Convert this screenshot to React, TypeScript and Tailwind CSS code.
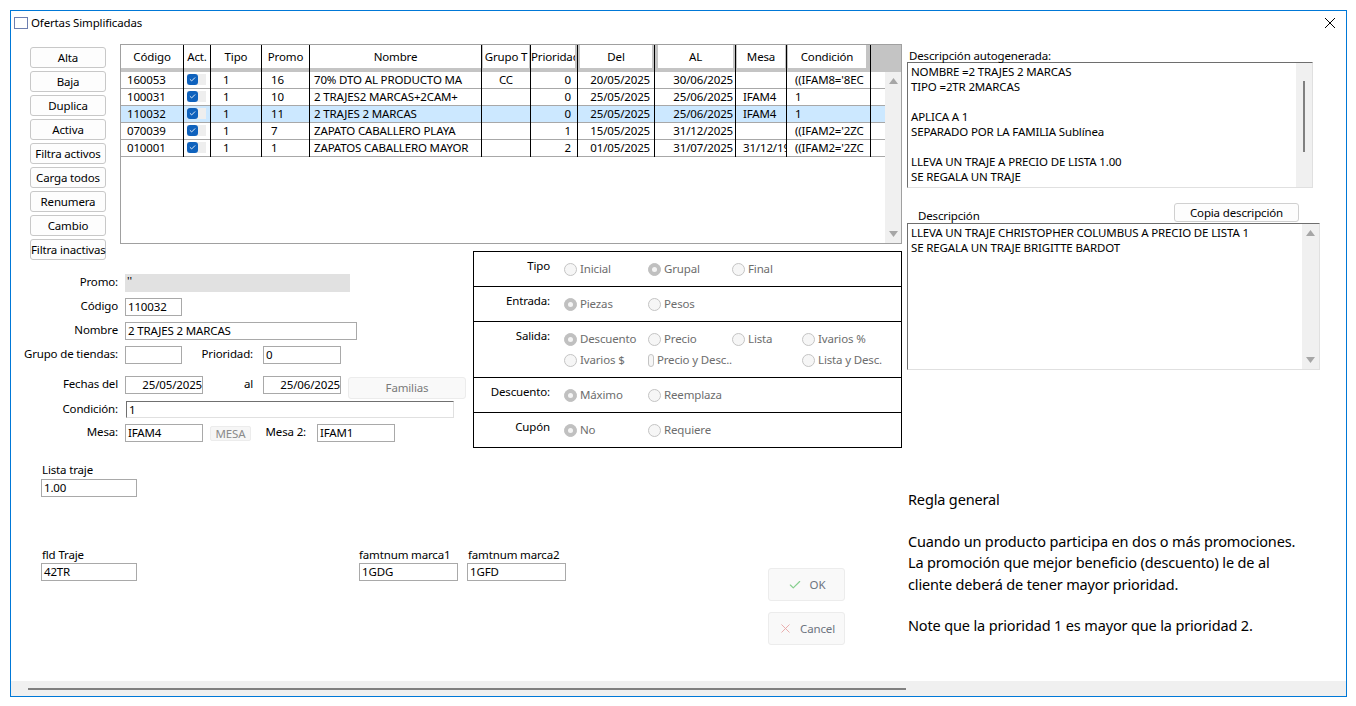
import * as React from 'react';
import { Check, X } from 'lucide-react';

// ── Data ──────────────────────────────────────────────────────────────────────

type Cell = { w: string; cell: string; head: string };

const COLUMNS: (Cell & { title: string })[] = [
  { title: 'Código',    w: 'w-[63px]', cell: 'pl-[6px]',           head: 'bg-white' },
  { title: 'Act.',      w: 'w-[27px]', cell: 'pl-[3px]',           head: 'bg-white' },
  { title: 'Tipo',      w: 'w-[51px]', cell: 'pl-[12px]',          head: 'bg-white' },
  { title: 'Promo',     w: 'w-[48px]', cell: 'pl-[9px]',           head: 'bg-white' },
  { title: 'Nombre',    w: 'w-[172px]', cell: 'pl-[4px]',          head: 'bg-white' },
  { title: 'Grupo T',   w: 'w-[49px]', cell: 'text-center',        head: 'bg-white ml-[1px] mr-[1px]' },
  { title: 'Prioridad', w: 'w-[47px]', cell: 'text-right pr-[6px]', head: 'bg-white mr-[2px]' },
  { title: 'Del',       w: 'w-[77px]', cell: 'text-right pr-[4px]', head: 'bg-white mx-[2px]' },
  { title: 'AL',        w: 'w-[81px]', cell: 'text-right pr-[2px]', head: 'bg-white ml-[3px] mr-[2px]' },
  { title: 'Mesa',      w: 'w-[51px]', cell: 'pl-[7px]',           head: 'bg-white mx-[1px]' },
  { title: 'Condición', w: 'w-[84px]', cell: 'pl-[8px]',           head: 'bg-white ml-[1px] mr-[4px]' },
];

const ROWS = [
  ['160053', '', '1', '16', '70% DTO AL PRODUCTO MA', 'CC', '0', '20/05/2025', '30/06/2025', '', "((IFAM8='8EC"],
  ['100031', '', '1', '10', '2 TRAJES2 MARCAS+2CAM+', '', '0', '25/05/2025', '25/06/2025', 'IFAM4', '1'],
  ['110032', '', '1', '11', '2 TRAJES 2 MARCAS', '', '0', '25/05/2025', '25/06/2025', 'IFAM4', '1'],
  ['070039', '', '1', '7', 'ZAPATO CABALLERO PLAYA', '', '1', '15/05/2025', '31/12/2025', '', "((IFAM2='2ZC"],
  ['010001', '', '1', '1', 'ZAPATOS CABALLERO MAYOR', '', '2', '01/05/2025', '31/07/2025', '31/12/1999', "((IFAM2='2ZC"],
];

const SIDE_BUTTONS = ['Alta', 'Baja', 'Duplica', 'Activa', 'Filtra activos', 'Carga todos', 'Renumera', 'Cambio', 'Filtra inactivas'];

// ── Small controls ────────────────────────────────────────────────────────────

function Arrow({ up }: { up?: boolean }) {
  return (
    <svg width="9" height="6" viewBox="0 0 9 6" className="fill-[#a6a6a6]">
      <path d={up ? 'M4.5 0 9 6H0z' : 'M0 0h9L4.5 6z'} />
    </svg>
  );
}

function Input({ w, value, h = 'h-[18px]', align = '' }: { w: string; value?: string; h?: string; align?: string }) {
  return (
    <div className={`${w} ${h} ${align} shrink-0 border border-[#a9a9a9] bg-white pl-[2px] leading-[16px] text-black whitespace-nowrap overflow-hidden`}>
      {value}
    </div>
  );
}

function Label({ w = 'w-[107px]', children }: { w?: string; children: React.ReactNode }) {
  return <div className={`${w} shrink-0 text-right text-black leading-[16px]`}>{children}</div>;
}

function Radio({ label, checked }: { label: string; checked?: boolean }) {
  return (
    <div className="flex h-[16px] items-center gap-[3px] text-[#6d6d6d] whitespace-nowrap">
      <span className={`flex h-[13px] w-[13px] items-center justify-center rounded-full border ${checked ? 'border-[#c0c0c0] bg-[#c0c0c0]' : 'border-[#c4c4c4] bg-[#f6f6f6]'}`}>
        {checked && <span className="h-[5px] w-[5px] rounded-full bg-[#f4f4f4]" />}
      </span>
      {label}
    </div>
  );
}

function RadioRow({ title, last, children, tall }: { title: string; last?: boolean; tall?: boolean; children: React.ReactNode }) {
  return (
    <div className={`flex ${tall ? 'h-[56px]' : last ? 'h-[34px]' : 'h-[35px]'} ${last ? '' : 'border-b border-black'}`}>
      <div className="w-[76px] pt-[6px] text-right leading-[16px] text-black">{title}</div>
      <div className="ml-[14px] grid grid-cols-[84px_84px_70px_1fr] gap-y-[5px] pt-[9px] w-[337px] content-start">
        {children}
      </div>
    </div>
  );
}

// ── Offers grid ───────────────────────────────────────────────────────────────

function OffersGrid() {
  return (
    <div className="ml-[14px] flex h-[200px] w-[782px] flex-col border border-[#a0a0a0] bg-white">
      <div className="flex h-[27px] shrink-0 bg-[#c4c4c4]">
        {COLUMNS.map(c => (
          <div key={c.title} className={`${c.w} shrink-0 border-r border-black`}>
            <div className={`${c.head} h-[23px] overflow-hidden whitespace-nowrap text-center leading-[23px] text-black`}>{c.title}</div>
          </div>
        ))}
      </div>
      <div className="flex flex-1">
        <div className="w-[764px]">
          {ROWS.map((r, idx) => (
            <div key={r[0]} className={`flex h-[17px] border-b border-[#a8a8a8] ${idx === 2 ? 'bg-[#cce8ff]' : ''}`}>
              {COLUMNS.map((c, i) => (
                <div key={c.title} className={`${c.w} ${c.cell} h-[17px] shrink-0 overflow-hidden whitespace-nowrap border-r border-black leading-[16px] text-black`}>
                  {i === 1 ? (
                    <span className="mt-[2px] flex h-[11px] w-[19px] bg-[#eeeeee]">
                      <span className="flex h-[11px] w-[11px] items-center justify-center rounded-[3px] bg-[#0f62bd]">
                        <Check size={7} strokeWidth={3} className="text-white" />
                      </span>
                    </span>
                  ) : r[i]}
                </div>
              ))}
            </div>
          ))}
        </div>
        <div className="flex w-[16px] flex-col items-center justify-between bg-[#f0f0f0] py-[6px]">
          <Arrow up />
          <Arrow />
        </div>
      </div>
    </div>
  );
}

// ── App ───────────────────────────────────────────────────────────────────────

export default function App() {
  return (
    <div className="h-[706px] w-[1356px] overflow-hidden bg-white pl-[10px] pt-[10px] font-['Noto_Sans','Open_Sans',sans-serif] text-[11.5px] tracking-[-0.15px]">
      <div className="flex h-[687px] w-[1337px] flex-col border border-[#0078d7]">
        {/* title bar */}
        <div className="flex h-[24px] shrink-0 items-center pl-[3px]">
          <span className="h-[12px] w-[14px] border border-[#6d7fb0] bg-white" />
          <span className="ml-[3px] text-black">Ofertas Simplificadas</span>
          <svg width="12" height="12" viewBox="0 0 12 12" className="ml-auto mr-[10px] stroke-black">
            <path d="M1 1l10 10M11 1 1 11" fill="none" />
          </svg>
        </div>

        <div className="flex flex-1">
          {/* left side */}
          <div className="w-[896px] shrink-0">
            <div className="mt-[9px] flex h-[207px] items-start">
              <div className="ml-[19px] mt-[3px] flex w-[76px] shrink-0 flex-col gap-[3px]">
                {SIDE_BUTTONS.map(b => (
                  <button key={b} className="h-[21px] rounded-[3px] border border-[#c8c8c8] bg-[#fdfdfd] leading-[18px] text-black whitespace-nowrap">{b}</button>
                ))}
              </div>
              <OffersGrid />
            </div>

            <div className="flex h-[197px]">
              {/* form */}
              <div className="w-[462px] shrink-0 pt-[23px]">
                <div className="flex h-[18px] gap-[7px]">
                  <Label>Promo:</Label>
                  <div className="h-[18px] w-[225px] bg-[#e1e1e1] pl-[2px] leading-[14px] text-black">''</div>
                </div>
                <div className="mt-[6px] flex h-[18px] gap-[7px]">
                  <Label>Código</Label>
                  <Input w="w-[57px]" value="110032" />
                </div>
                <div className="mt-[6px] flex h-[18px] gap-[7px]">
                  <Label>Nombre</Label>
                  <Input w="w-[232px]" value="2 TRAJES 2 MARCAS" />
                </div>
                <div className="mt-[6px] flex h-[18px] gap-[7px]">
                  <Label>Grupo de tiendas:</Label>
                  <Input w="w-[57px]" />
                  <Label w="w-[64px]">Prioridad:</Label>
                  <div className="ml-[3px]"><Input w="w-[78px]" value="0" /></div>
                </div>
                <div className="mt-[12px] flex h-[18px] items-start gap-[7px]">
                  <Label>Fechas del</Label>
                  <Input w="w-[78px]" value="25/05/2025" align="text-right" />
                  <Label w="w-[43px]">al</Label>
                  <div className="ml-[3px]"><Input w="w-[78px]" value="25/06/2025" align="text-right" /></div>
                  <button className="mt-[1px] h-[22px] w-[118px] shrink-0 rounded-[3px] border border-[#ececec] bg-[#f9f9f9] text-center text-[#7a7a7a]">Familias</button>
                </div>
                <div className="mt-[7px] flex h-[17px] gap-[8px]">
                  <Label>Condición:</Label>
                  <div className="h-[17px] w-[328px] border border-[#e0e0e0] border-l-[#707070] border-t-[#707070] pl-[2px] leading-[15px] text-black">1</div>
                </div>
                <div className="mt-[6px] flex h-[18px] items-start gap-[7px]">
                  <Label>Mesa:</Label>
                  <Input w="w-[78px]" value="IFAM4" />
                  <button className="mt-[2px] h-[15px] w-[41px] shrink-0 rounded-[2px] border border-[#ececec] bg-[#f6f6f6] leading-[13px] text-[#8a8a8a]">MESA</button>
                  <Label w="w-[48px]">Mesa 2:</Label>
                  <div className="ml-[4px]"><Input w="w-[78px]" value="IFAM1" /></div>
                </div>
              </div>

              {/* radio panel */}
              <div className="h-[197px] w-[429px] shrink-0 border border-black">
                <RadioRow title="Tipo">
                  <Radio label="Inicial" /><Radio label="Grupal" checked /><Radio label="Final" />
                </RadioRow>
                <RadioRow title="Entrada:">
                  <Radio label="Piezas" checked /><Radio label="Pesos" />
                </RadioRow>
                <RadioRow title="Salida:" tall>
                  <Radio label="Descuento" checked /><Radio label="Precio" /><Radio label="Lista" /><Radio label="Ivarios %" />
                  <Radio label="Ivarios $" /><Radio label="Precio y Desc.." /><span /><Radio label="Lista y Desc." />
                </RadioRow>
                <RadioRow title="Descuento:">
                  <Radio label="Máximo" checked /><Radio label="Reemplaza" />
                </RadioRow>
                <RadioRow title="Cupón" last>
                  <Radio label="No" checked /><Radio label="Requiere" />
                </RadioRow>
              </div>
            </div>

            {/* lower fields and OK / Cancel */}
            <div className="flex">
              <div className="ml-[30px] w-[727px] shrink-0 pt-[13px] text-black">
                <div className="pl-[1px] leading-[18px]">Lista traje</div>
                <Input w="w-[96px]" value="1.00" />
                <div className="mt-[50px] flex">
                  <div className="w-[318px]">
                    <div className="pl-[1px] leading-[16px]">fld Traje</div>
                    <Input w="w-[96px]" value="42TR" />
                  </div>
                  <div className="w-[108px]">
                    <div className="leading-[16px]">famtnum marca1</div>
                    <Input w="w-[99px]" value="1GDG" />
                  </div>
                  <div>
                    <div className="pl-[1px] leading-[16px]">famtnum marca2</div>
                    <Input w="w-[99px]" value="1GFD" />
                  </div>
                </div>
              </div>
              <div className="mt-[120px] flex w-[77px] flex-col gap-[11px] text-[#6d7480]">
                <button className="flex h-[33px] items-center justify-center gap-[8px] rounded-[3px] border border-[#ececec] bg-[#f9f9f9]">
                  <Check size={14} strokeWidth={2} className="text-[#86cf8e]" />
                  OK
                </button>
                <button className="flex h-[33px] items-center justify-center gap-[7px] rounded-[3px] border border-[#ececec] bg-[#f9f9f9]">
                  <X size={15} strokeWidth={1.5} className="text-[#e9a9a9]" />
                  Cancel
                </button>
              </div>
            </div>
          </div>

          {/* right side */}
          <div className="flex-1 pt-[14px] text-black">
            <div className="pl-[2px] leading-[13px]">Descripción autogenerada:</div>
            <div className="flex h-[126px] w-[406px] border border-[#e0e0e0] border-l-[#6e6e6e] border-t-[#6e6e6e]">
              <div className="flex-1 pl-[3px] pt-[1px] leading-[15px]">
                <div>NOMBRE =2 TRAJES 2 MARCAS</div>
                <div>TIPO =2TR 2MARCAS</div>
                <div className="mt-[15px]">APLICA A 1</div>
                <div>SEPARADO POR LA FAMILIA Sublínea</div>
                <div className="mt-[15px]">LLEVA UN TRAJE A PRECIO DE LISTA 1.00</div>
                <div>SE REGALA UN TRAJE</div>
              </div>
              <div className="w-[16px] bg-[#f0f0f0] pt-[18px]">
                <div className="ml-[7px] h-[71px] w-[2px] bg-[#808080]" />
              </div>
            </div>
            <div className="mt-[15px] flex h-[20px] items-end">
              <div className="ml-[11px] w-[256px] leading-[14px]">Descripción</div>
              <button className="mb-[1px] h-[19px] w-[125px] rounded-[3px] border border-[#d0d0d0] bg-[#fdfdfd] leading-[15px]">Copia descripción</button>
            </div>
            <div className="flex h-[147px] w-[413px] border border-[#e0e0e0] border-l-[#6e6e6e] border-t-[#6e6e6e]">
              <div className="flex-1 pl-[3px] pt-[1px] leading-[15px]">
                <div>LLEVA UN TRAJE CHRISTOPHER COLUMBUS A PRECIO DE LISTA 1</div>
                <div>SE REGALA UN TRAJE BRIGITTE BARDOT</div>
              </div>
              <div className="flex w-[17px] flex-col items-center justify-between bg-[#f0f0f0] py-[6px]">
                <Arrow up />
                <Arrow />
              </div>
            </div>
            <div className="ml-[1px] mt-[119px] w-[420px] text-[14.5px] leading-[21.5px]">
              <div>Regla general</div>
              <div className="mt-[20px]">Cuando un producto participa en dos o más  promociones.</div>
              <div>La promoción que mejor beneficio (descuento)  le de al</div>
              <div>cliente deberá de tener mayor prioridad.</div>
              <div className="mt-[20px]">Note que la prioridad 1 es mayor que la prioridad 2.</div>
            </div>
          </div>
        </div>

        {/* horizontal scrollbar */}
        <div className="flex h-[15px] shrink-0 items-center bg-[#f0f0f0] pl-[17px]">
          <div className="h-[2px] w-[878px] bg-[#808080]" />
        </div>
      </div>
    </div>
  );
}
